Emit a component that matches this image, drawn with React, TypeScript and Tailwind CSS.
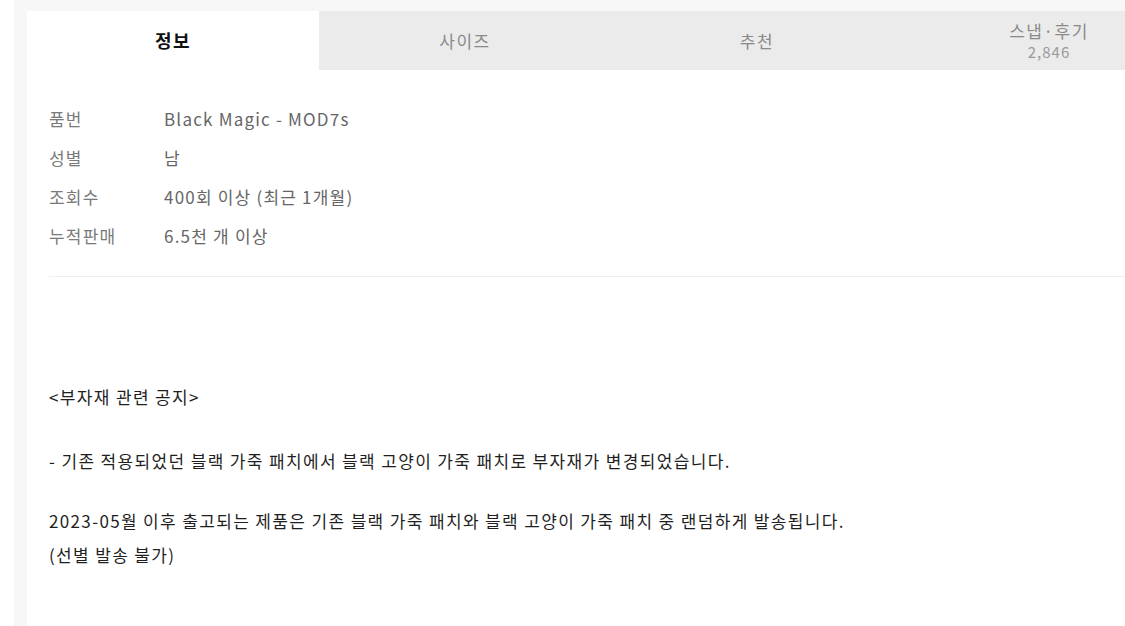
import React from "react";

const tabs = [
  { label: "정보", active: true },
  { label: "사이즈" },
  { label: "추천" },
  { label: "스냅·후기", count: "2,846" },
];

const specs = [
  ["품번", "Black Magic - MOD7s"],
  ["성별", "남"],
  ["조회수", "400회 이상 (최근 1개월)"],
  ["누적판매", "6.5천 개 이상"],
];

export default function App() {
  return (
    <div className="h-[626px] overflow-hidden bg-white pl-[14px] font-['Noto_Sans_CJK_KR',sans-serif]">
      <div className="h-full bg-[#f7f7f7] pl-[13px] pt-[11px]">
        <div className="h-full bg-white">
          {/* Tabs */}
          <div className="flex h-[59px] w-[1168px]">
            {tabs.map((t) => (
              <div
                key={t.label}
                className={
                  "flex w-[292px] shrink-0 flex-col items-center justify-center " +
                  (t.active ? "bg-white" : "bg-[#ebebeb]")
                }
              >
                <span
                  className={
                    t.active
                      ? "text-[18px] font-bold tracking-[1.5px] text-[#111]"
                      : "text-[17px] leading-[22px] tracking-[1.5px] text-[#8a8a8a]"
                  }
                >
                  {t.label}
                </span>
                {t.count && (
                  <span className="text-[15px] leading-[20px] tracking-[1px] text-[#999]">{t.count}</span>
                )}
              </div>
            ))}
          </div>

          {/* Specs */}
          <div className="pl-[22px] pt-[29px]">
            <div className="flex flex-col pb-[21px]">
              {specs.map(([k, v]) => (
                <div key={k} className="flex h-[39px] items-center text-[17px] tracking-[1.2px]">
                  <span className="w-[115px] text-[#7a7a7a]">{k}</span>
                  <span className="text-[#666]">{v}</span>
                </div>
              ))}
            </div>
            <div className="h-px bg-[#eeeeee]" />

            {/* Notice */}
            <div className="pt-[103px] text-[17px] leading-[34px] tracking-[1.35px] text-[#1f1f1f]">
              <p>&lt;부자재 관련 공지&gt;</p>
              <p className="mt-[30px]">
                - 기존 적용되었던 블랙 가죽 패치에서 블랙 고양이 가죽 패치로 부자재가 변경되었습니다.
              </p>
              <p className="mt-[26px]">
                2023-05월 이후 출고되는 제품은 기존 블랙 가죽 패치와 블랙 고양이 가죽 패치 중 랜덤하게 발송됩니다.
              </p>
              <p>(선별 발송 불가)</p>
            </div>
          </div>
        </div>
      </div>
    </div>
  );
}
